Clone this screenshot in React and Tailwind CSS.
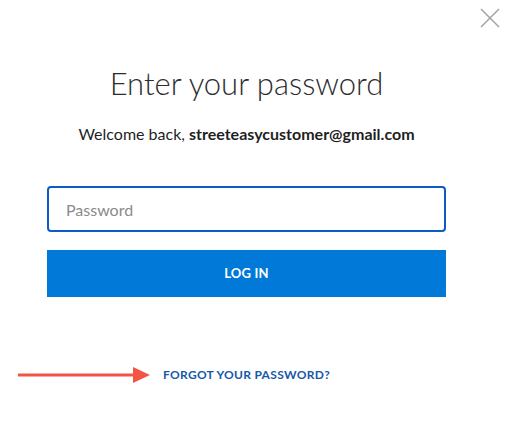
import { useState } from 'react'

export default function App() {
  const [password, setPassword] = useState('')

  return (
    <div
      className="relative w-[512px] h-[424px] bg-white overflow-hidden"
      style={{ fontFamily: 'Lato, "Open Sans", sans-serif' }}
    >
      {/* ── Close ── */}
      <button className="absolute right-[12px] top-[8px] w-[20px] h-[20px]" aria-label="Close">
        <svg width="20" height="20" viewBox="0 0 20 20">
          <path d="M1 1 L19 19 M19 1 L1 19" stroke="#a3a3a3" strokeWidth="1.5" fill="none" />
        </svg>
      </button>

      <div className="ml-[47px] w-[399px] flex flex-col items-center pt-[64px]">
        <h1 className="text-[31px] leading-[38px] font-light text-[#2d2d2d]">Enter your password</h1>
        <p className="mt-[22px] text-[16px] leading-[20px] text-[#1f1f1f]">
          Welcome back, <span className="font-bold">streeteasycustomer@gmail.com</span>
        </p>

        {/* ── Form ── */}
        <input
          type="password"
          value={password}
          onChange={e => setPassword(e.target.value)}
          placeholder="Password"
          className="mt-[42px] w-full h-[46px] px-[17px] rounded-[4px] border-2 border-[#0b5cc4] text-[16px] text-[#333] placeholder:text-[#8a8a8a] outline-none"
        />
        <button className="mt-[18px] w-full h-[47px] bg-[#0079d8] text-white text-[13px] font-bold tracking-[0.2px]">
          LOG IN
        </button>
      </div>

      {/* ── Forgot ── */}
      <div className="relative mt-[68px] h-[20px] flex items-center pl-[163px]">
        <svg className="absolute left-[17px] top-[1px]" width="134" height="18" viewBox="0 0 134 18">
          <path d="M1 9 H120" stroke="#f25546" strokeWidth="3" fill="none" />
          <path d="M116 1 L133 9 L116 17 Z" fill="#f25546" />
        </svg>
        <a href="#" className="text-[12px] font-bold text-[#1658a8] tracking-[0.3px]">FORGOT YOUR PASSWORD?</a>
      </div>
    </div>
  )
}
